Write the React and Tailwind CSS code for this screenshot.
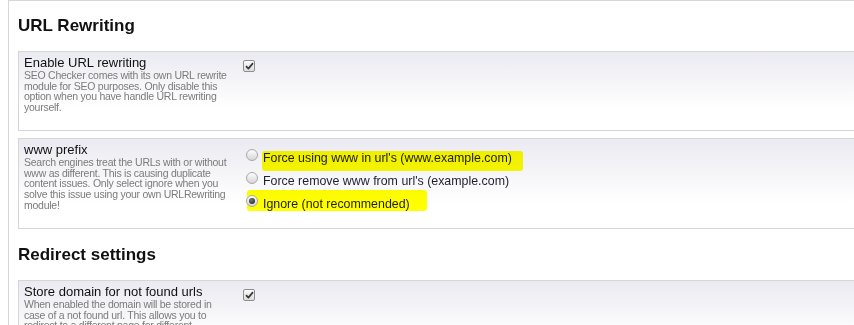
import React from 'react';

function Checkbox() {
  return (
    <span className="mt-[5px] flex h-[12px] w-[12px] items-center justify-center rounded-[2px] border border-[#8e8e8e] bg-[linear-gradient(to_bottom,#fbfbfb,#dcdcdc)]">
      <svg width="9" height="8" viewBox="0 0 9 8">
        <path d="M1 4.2 L3.4 6.6 L8 1.2" fill="none" stroke="#3a3a3a" strokeWidth="1.8" strokeLinejoin="round" />
      </svg>
    </span>
  );
}

function Radio({ checked }) {
  return (
    <span className="relative z-10 mb-[6px] ml-[3px] flex h-[12px] w-[12px] shrink-0 items-center justify-center rounded-full border border-[#a8a8a8] bg-[linear-gradient(to_bottom,#fdfdfd,#d6d6d6)]">
      {checked && <span className="h-[6px] w-[6px] rounded-full bg-[radial-gradient(circle_at_40%_35%,#777,#1a1a1a)]" />}
    </span>
  );
}

function Setting({ title, lines, children }) {
  return (
    <div className="flex border-y border-l border-[#d6d6d6] bg-[linear-gradient(to_bottom,#eaeaf1,#ffffff_72%)] pb-[17px] pl-[5px] pt-[3px]">
      <div className="w-[219px] shrink-0">
        <div className="text-[13px] leading-[15px] text-[#111]">{title}</div>
        <div className="whitespace-nowrap text-[10.5px] leading-[10.7px] tracking-[-0.25px] text-[#7b7b7b]">
          {lines.map((l, i) => (
            <div key={i}>{l}</div>
          ))}
        </div>
      </div>
      <div>{children}</div>
    </div>
  );
}

export default function App() {
  return (
    <div className="h-[325px] w-[854px] overflow-hidden bg-white font-['Liberation_Sans',Arial,sans-serif]">
      <div className="ml-[8px] h-full border-l border-t border-[#d6d6d6] pl-[9px]">
        <h2 className="pt-[15px] text-[17px] font-bold leading-[20px] text-[#111]">URL Rewriting</h2>

        <div className="mt-[15px] flex flex-col gap-[7px]">
          <Setting
            title="Enable URL rewriting"
            lines={[
              'SEO Checker comes with its own URL rewrite',
              'module for SEO purposes. Only disable this',
              'option when you have handle URL rewriting',
              'yourself.',
            ]}
          >
            <Checkbox />
          </Setting>

          <Setting
            title="www prefix"
            lines={[
              'Search engines treat the URLs with or without',
              'www as different. This is causing duplicate',
              'content issues. Only select ignore when you',
              'solve this issue using your own URLRewriting',
              'module!',
            ]}
          >
            <div className="-mb-[5px] mt-[5px] text-[12.4px] text-[#1f1f30]">
              <div className="relative flex h-[23px] items-center">
                <Radio />
                <span className="ml-[5px] whitespace-nowrap">Force using www in url's (www.example.com)</span>
                <span className="absolute left-[19px] top-[4px] h-[20px] w-[261px] rounded-[3px] bg-[#ffff00] mix-blend-multiply" />
              </div>
              <div className="flex h-[23px] items-center">
                <Radio />
                <span className="ml-[5px] whitespace-nowrap">Force remove www from url's (example.com)</span>
              </div>
              <div className="relative flex h-[23px] items-center">
                <Radio checked />
                <span className="ml-[5px] whitespace-nowrap">Ignore (not recommended)</span>
                <span className="absolute left-[4px] top-[-3px] h-[21px] w-[180px] rounded-[3px] bg-[#ffff00] mix-blend-multiply" />
              </div>
            </div>
          </Setting>
        </div>

        <h2 className="mt-[16px] text-[17px] font-bold leading-[20px] text-[#111]">Redirect settings</h2>

        <div className="mt-[15px]">
          <Setting
            title="Store domain for not found urls"
            lines={[
              'When enabled the domain will be stored in',
              'case of a not found url. This allows you to',
              'redirect to a different page for different',
              'domains.',
            ]}
          >
            <Checkbox />
          </Setting>
        </div>
      </div>
    </div>
  );
}
